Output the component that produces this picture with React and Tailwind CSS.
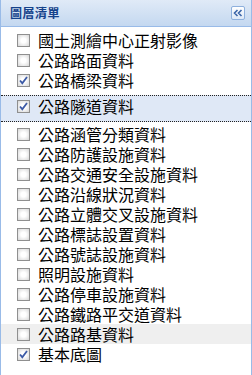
const layers = [
  { name: "國土測繪中心正射影像", checked: false },
  { name: "公路路面資料", checked: false },
  { name: "公路橋梁資料", checked: true },
  { name: "公路隧道資料", checked: true, selected: true },
  { name: "公路涵管分類資料", checked: false },
  { name: "公路防護設施資料", checked: false },
  { name: "公路交通安全設施資料", checked: false },
  { name: "公路沿線狀況資料", checked: false },
  { name: "公路立體交叉設施資料", checked: false },
  { name: "公路標誌設置資料", checked: false },
  { name: "公路號誌設施資料", checked: false },
  { name: "照明設施資料", checked: false },
  { name: "公路停車設施資料", checked: false },
  { name: "公路鐵路平交道資料", checked: false },
  { name: "公路路基資料", checked: false, hover: true },
  { name: "基本底圖", checked: true },
];

function Checkbox({ checked }) {
  return (
    <div className="w-[13px] h-[13px] shrink-0 border border-[#8f8f8f] bg-[radial-gradient(circle,#ffffff_30%,#d6d6d6_100%)] relative">
      {checked && (
        <svg className="absolute inset-0" width="11" height="11" viewBox="0 0 11 11">
          <path d="M2 5.5 L4.3 8.2 L9 2" fill="none" stroke="#3c5aa6" strokeWidth="1.8" />
        </svg>
      )}
    </div>
  );
}

function LayerRow({ layer }) {
  if (layer.selected) {
    return (
      <div className="mt-[5px] mb-[2px] h-[27px] border-y border-dotted border-[#222] bg-[#dfe8f6] flex items-start pl-[16px] pt-[4px]">
        <Checkbox checked={layer.checked} />
        <span className="ml-[8px] -mt-[4px] leading-[20px] text-[16px] text-black">{layer.name}</span>
      </div>
    );
  }
  return (
    <div className={`h-[20px] flex items-center pl-[16px] ${layer.hover ? "bg-[#efefef]" : ""}`}>
      <Checkbox checked={layer.checked} />
      <span className="ml-[8px] leading-[20px] text-[16px] text-black">{layer.name}</span>
    </div>
  );
}

export default function App() {
  return (
    <div
      className="w-[252px] h-[375px] bg-white border-x border-[#99bbe8] overflow-hidden"
      style={{ fontFamily: '"Noto Sans CJK TC", "Noto Sans", sans-serif' }}
    >
      <div className="h-[27px] border-b border-[#99bbe8] bg-gradient-to-b from-[#e0eaf7] to-[#c4d8f0] flex items-center justify-between pl-[9px] pr-[6px]">
        <span className="text-[12px] font-bold text-[#15428b] tracking-[0.5px]">圖層清單</span>
        <div className="w-[14px] h-[14px] rounded-[2px] border border-[#8eb0dd] bg-gradient-to-b from-[#ffffff] to-[#dce8f7] flex items-center justify-center">
          <svg width="10" height="8" viewBox="0 0 10 8">
            <path d="M4.5 1 L1.5 4 L4.5 7 M8.5 1 L5.5 4 L8.5 7" fill="none" stroke="#3a64a8" strokeWidth="1.6" />
          </svg>
        </div>
      </div>
      <div className="pt-[3px]">
        {layers.map((layer) => (
          <LayerRow key={layer.name} layer={layer} />
        ))}
      </div>
    </div>
  );
}
